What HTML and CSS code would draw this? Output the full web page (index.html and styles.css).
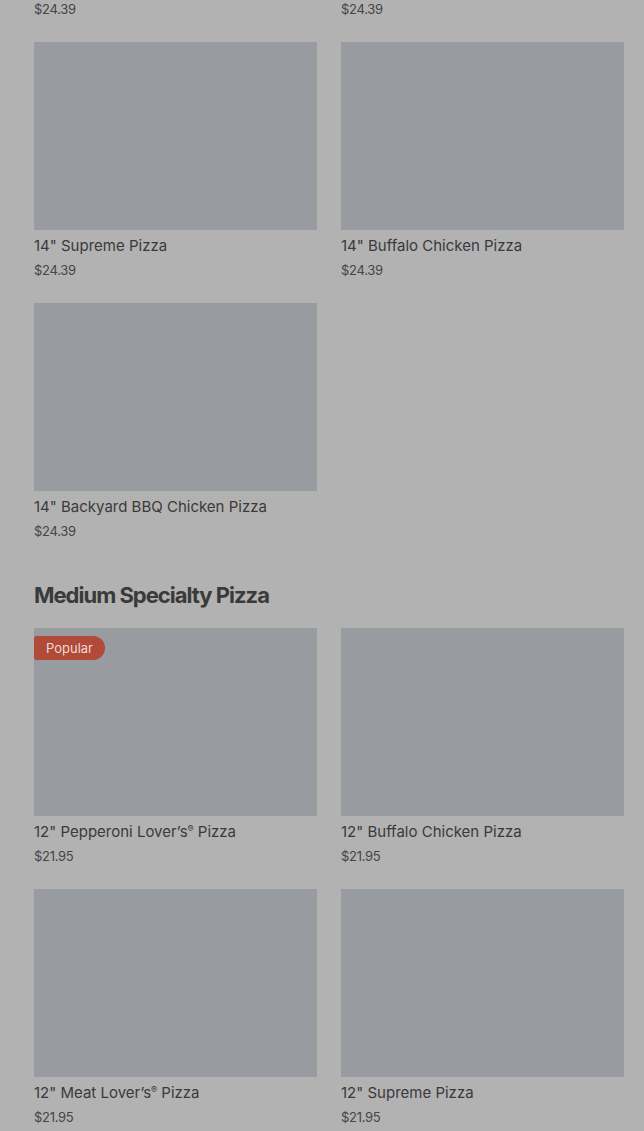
FILE: index.html
```html
<!DOCTYPE html>
<html lang="en">
<head>
<meta charset="utf-8">
<title>Menu</title>
<link rel="stylesheet" href="styles.css">
</head>
<body>
<main class="menu">
  <div class="grid">
    <div class="card card--tail"><p class="price">$24.39</p></div>
    <div class="card card--tail"><p class="price">$24.39</p></div>

    <div class="card"><div class="thumb"></div><h3 class="name">14" Supreme Pizza</h3><p class="price">$24.39</p></div>
    <div class="card"><div class="thumb"></div><h3 class="name">14" Buffalo Chicken Pizza</h3><p class="price">$24.39</p></div>

    <div class="card"><div class="thumb"></div><h3 class="name">14" Backyard BBQ Chicken Pizza</h3><p class="price">$24.39</p></div>
  </div>

  <h2 class="section-title">Medium Specialty Pizza</h2>

  <div class="grid">
    <div class="card"><div class="thumb"><span class="badge">Popular</span></div><h3 class="name">12" Pepperoni Lover’s<span class="reg">®</span> Pizza</h3><p class="price">$21.95</p></div>
    <div class="card"><div class="thumb"></div><h3 class="name">12" Buffalo Chicken Pizza</h3><p class="price">$21.95</p></div>

    <div class="card"><div class="thumb"></div><h3 class="name">12" Meat Lover’s<span class="reg">®</span> Pizza</h3><p class="price">$21.95</p></div>
    <div class="card"><div class="thumb"></div><h3 class="name">12" Supreme Pizza</h3><p class="price">$21.95</p></div>
  </div>
</main>
</body>
</html>
```

FILE: styles.css
```css
html, body {
  margin: 0;
  padding: 0;
}
body {
  background: #b2b2b2;
  font-family: Inter, "Liberation Sans", sans-serif;
  color: #3a3a3a;
  height: 1131px;
  overflow: hidden;
}
.menu {
  padding: 0 20px 0 34px;
}
.grid {
  display: grid;
  grid-template-columns: 283px 283px;
  column-gap: 24px;
  row-gap: 24px;
}
.card {
  display: flex;
  flex-direction: column;
}
.thumb {
  position: relative;
  height: 188px;
  background: #989ba0;
}
.name {
  margin: 6px 0 0;
  font-size: 15px;
  line-height: 20px;
  font-weight: 400;
  letter-spacing: 0;
  color: #3a3a3a;
}
.reg {
  font-size: 9px;
  vertical-align: 5px;
  line-height: 0;
}
.price {
  margin: 5px 0 0;
  font-size: 13px;
  line-height: 18px;
  font-weight: 400;
  letter-spacing: -0.3px;
  color: #454545;
}
.card--tail .price {
  margin: 0;
}
.section-title {
  margin: 39px 0 17px;
  font-size: 22px;
  line-height: 32px;
  font-weight: 700;
  letter-spacing: -1px;
  color: #3a3a3a;
}
.badge {
  position: absolute;
  top: 8px;
  left: 0;
  height: 24px;
  padding: 0 12px;
  display: flex;
  align-items: center;
  background: #b14a38;
  color: #eed9d4;
  font-size: 13px;
  border-radius: 2px 12px 12px 2px;
}
```
